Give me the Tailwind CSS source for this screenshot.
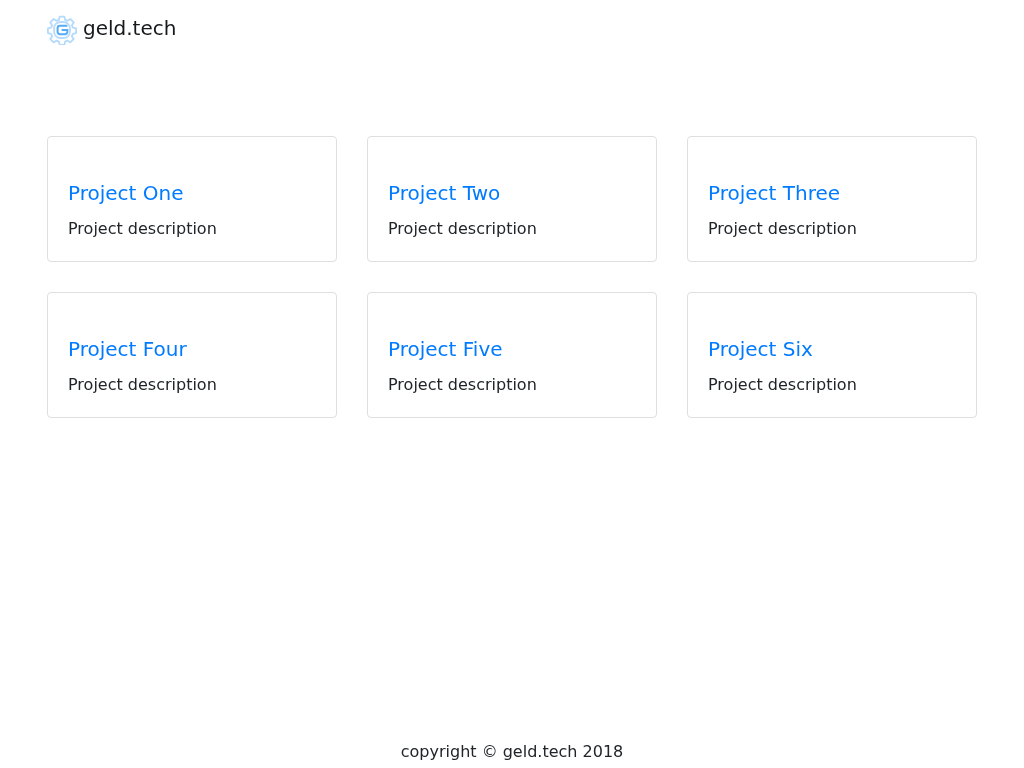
<!DOCTYPE html>
<html lang="en">
<head>
  <meta charset="UTF-8" />
  <meta name="viewport" content="width=device-width, initial-scale=1.0" />
  <title>geld.tech</title>
  <script src="https://cdn.jsdelivr.net/npm/@tailwindcss/browser@4"></script>
</head>
<body class="bg-white text-[#212529] font-['DejaVu_Sans',sans-serif] text-base h-[768px] overflow-hidden flex flex-col">

  <!-- header -->
  <header class="h-[136px] px-[47px] pt-[13px] will-change-transform">
    <a href="#" class="flex items-center gap-[6px] text-[20px] leading-[26px] text-[#16181b]">
      <svg viewBox="0 0 30 30" class="w-[30px] h-[30px] mt-[2px]" fill="none">
        <path d="M12.6 1.6h4.8l.7 3.2 2.4 1 2.8-1.8 3.4 3.4-1.8 2.8 1 2.4 3.2.7v4.8l-3.2.7-1 2.4 1.8 2.8-3.4 3.4-2.8-1.8-2.4 1-.7 3.2h-4.8l-.7-3.2-2.4-1-2.8 1.8-3.4-3.4 1.8-2.8-1-2.4-3.2-.7v-4.8l3.2-.7 1-2.4-1.8-2.8 3.4-3.4 2.8 1.8 2.4-1z" stroke="#b4dafc" stroke-width="1.8" stroke-linejoin="round"/>
        <rect x="7" y="7" width="16" height="16" rx="6.5" stroke="#b9dcfc" stroke-width="1.8"/>
        <path d="M20.4 10.8h-7.4a2.4 2.4 0 0 0-2.4 2.4v3.6a2.4 2.4 0 0 0 2.4 2.4h5a2.4 2.4 0 0 0 2.4-2.4v-1.8h-5.8" stroke="#55abf8" stroke-width="2"/>
      </svg>
      <span class="-mt-[2px]">geld.tech</span>
    </a>
  </header>

  <!-- projects -->
  <main class="grid grid-cols-3 gap-[30px] px-[47px] will-change-transform">
    <div class="border border-black/[.125] rounded-[4px] px-[20px] pt-[44px] pb-[20px]">
      <h5 class="text-[20px] leading-[24px] mb-[12px] text-[#007bff]">Project One</h5>
      <p class="leading-[24px]">Project description</p>
    </div>
    <div class="border border-black/[.125] rounded-[4px] px-[20px] pt-[44px] pb-[20px]">
      <h5 class="text-[20px] leading-[24px] mb-[12px] text-[#007bff]">Project Two</h5>
      <p class="leading-[24px]">Project description</p>
    </div>
    <div class="border border-black/[.125] rounded-[4px] px-[20px] pt-[44px] pb-[20px]">
      <h5 class="text-[20px] leading-[24px] mb-[12px] text-[#007bff]">Project Three</h5>
      <p class="leading-[24px]">Project description</p>
    </div>
    <div class="border border-black/[.125] rounded-[4px] px-[20px] pt-[44px] pb-[20px]">
      <h5 class="text-[20px] leading-[24px] mb-[12px] text-[#007bff]">Project Four</h5>
      <p class="leading-[24px]">Project description</p>
    </div>
    <div class="border border-black/[.125] rounded-[4px] px-[20px] pt-[44px] pb-[20px]">
      <h5 class="text-[20px] leading-[24px] mb-[12px] text-[#007bff]">Project Five</h5>
      <p class="leading-[24px]">Project description</p>
    </div>
    <div class="border border-black/[.125] rounded-[4px] px-[20px] pt-[44px] pb-[20px]">
      <h5 class="text-[20px] leading-[24px] mb-[12px] text-[#007bff]">Project Six</h5>
      <p class="leading-[24px]">Project description</p>
    </div>
  </main>

  <footer class="mt-auto pb-[4px] text-center leading-[24px] will-change-transform">copyright © geld.tech 2018</footer>

</body>
</html>
